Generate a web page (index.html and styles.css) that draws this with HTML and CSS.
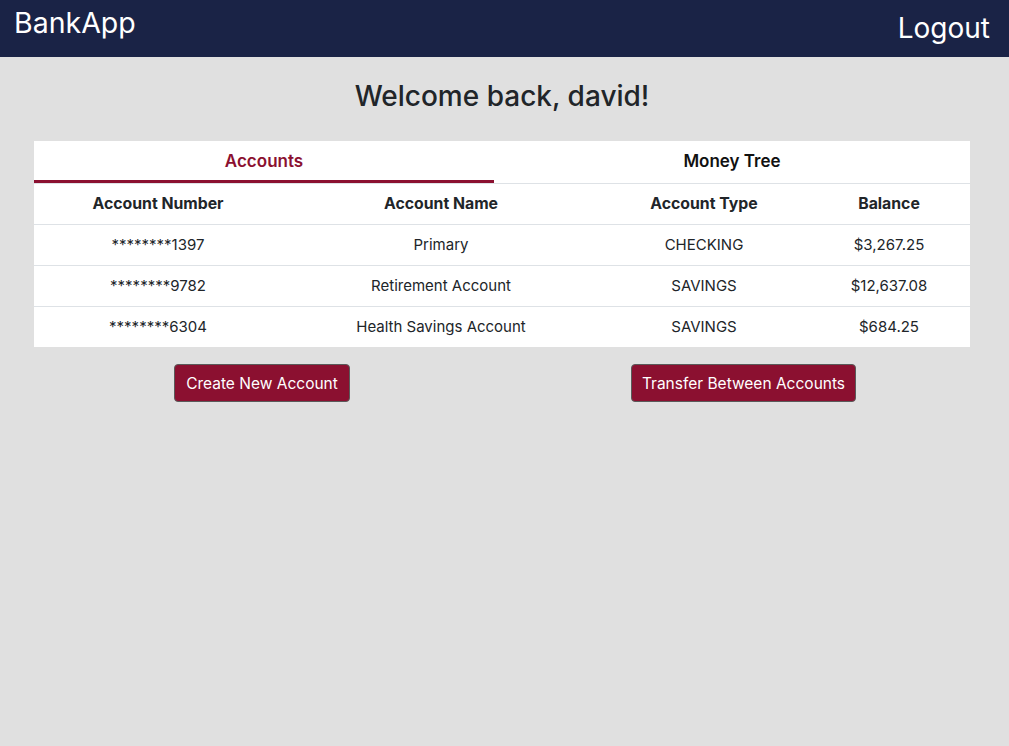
FILE: index.html
```html
<!DOCTYPE html>
<html lang="en">
<head>
<meta charset="utf-8">
<title>BankApp</title>
<link rel="stylesheet" href="styles.css">
</head>
<body>
<header class="topbar">
  <div class="brand">BankApp</div>
  <a class="logout" href="#">Logout</a>
</header>
<main class="content">
  <h1 class="welcome">Welcome back, david!</h1>
  <section class="card">
    <nav class="tabs">
      <div class="tab tab-active">Accounts</div>
      <div class="tab tab-second">Money Tree</div>
    </nav>
    <table class="accounts">
      <thead>
        <tr><th class="c1">Account Number</th><th class="c2">Account Name</th><th class="c3">Account Type</th><th class="c4">Balance</th></tr>
      </thead>
      <tbody>
        <tr><td>********1397</td><td>Primary</td><td>CHECKING</td><td>$3,267.25</td></tr>
        <tr><td>********9782</td><td>Retirement Account</td><td>SAVINGS</td><td>$12,637.08</td></tr>
        <tr><td>********6304</td><td>Health Savings Account</td><td>SAVINGS</td><td>$684.25</td></tr>
      </tbody>
    </table>
  </section>
  <div class="actions">
    <button class="btn btn-create">Create New Account</button>
    <button class="btn btn-transfer">Transfer Between Accounts</button>
  </div>
</main>
</body>
</html>
```

FILE: styles.css
```css
* { box-sizing: border-box; }
html, body { margin: 0; padding: 0; }
body {
  background: #e0e0e0;
  font-family: Inter, "Noto Sans", "Liberation Sans", sans-serif;
  color: #212529;
  min-height: 746px;
}
.topbar {
  height: 57px;
  background: #1a2346;
  display: flex;
  justify-content: space-between;
  align-items: flex-start;
  padding: 0 19px 0 14px;
  color: #fff;
}
.brand {
  font-size: 28.5px;
  line-height: 1;
  margin-top: 9px;
}
.logout {
  color: #fff;
  text-decoration: none;
  font-size: 28px;
  line-height: 1;
  margin-top: 14px;
}
.content {
  padding: 0 39px 0 34px;
}
.welcome {
  margin: 0;
  height: 84px;
  padding-top: 21px;
  text-align: center;
  font-size: 28px;
  font-weight: 500;
  line-height: 36px;
  color: #212529;
}
.card {
  background: #fff;
  width: 936px;
}
.tabs {
  display: flex;
  height: 43px;
  border-bottom: 1px solid #dee2e6;
}
.tab {
  font-size: 17px;
  font-weight: 600;
  text-align: center;
  line-height: 41px;
  color: #111;
}
.tab-active {
  width: 460px;
  color: #8b1030;
  border-bottom: 3px solid #8b1030;
  height: 42px;
}
.tab-second { width: 476px; }
.accounts {
  width: 936px;
  border-collapse: collapse;
  table-layout: fixed;
  font-size: 15px;
}
.accounts th, .accounts td {
  height: 41px;
  padding: 0;
  text-align: center;
  vertical-align: middle;
}
.accounts th { height: 40px; font-weight: 700; font-size: 15.8px; color: #212529; }
.accounts td { color: #212529; }
.accounts tbody tr td { border-top: 1px solid #dee2e6; }
.c1 { width: 248px; }
.c2 { width: 318px; }
.c3 { width: 208px; }
.c4 { width: 162px; }
.actions {
  display: flex;
  padding-left: 140px;
  margin-top: 17px;
  gap: 281px;
}
.btn {
  background: #8b1030;
  color: #fff;
  border: 1px solid #5a5a5a;
  border-radius: 4px;
  font-family: Inter, "Noto Sans", "Liberation Sans", sans-serif;
  font-size: 15.5px;
  height: 38px;
  padding: 0;
  white-space: nowrap;
}
.btn-create { width: 176px; }
.btn-transfer { width: 225px; }
```
